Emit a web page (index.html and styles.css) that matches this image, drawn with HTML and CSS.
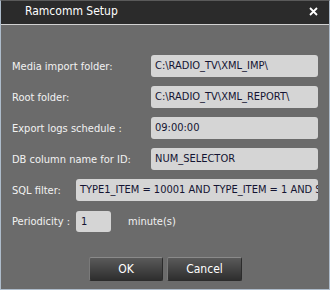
FILE: index.html
```html
<!DOCTYPE html>
<html>
<head>
<meta charset="utf-8">
<link rel="stylesheet" href="styles.css">
</head>
<body>
<div class="window">
  <div class="titlebar">
    <span class="title">Ramcomm Setup</span>
    <svg class="close" width="9" height="9" viewBox="0 0 9 9"><path d="M1 1L8 8M8 1L1 8" stroke="#ffffff" stroke-width="1.8"/></svg>
  </div>
  <div class="content">
    <div class="row"><span class="label wide">Media import folder:</span><div class="field long">C:\RADIO_TV\XML_IMP\</div></div>
    <div class="row"><span class="label wide">Root folder:</span><div class="field long">C:\RADIO_TV\XML_REPORT\</div></div>
    <div class="row"><span class="label wide">Export logs schedule :</span><div class="field long">09:00:00</div></div>
    <div class="row"><span class="label wide">DB column name for ID:</span><div class="field long">NUM_SELECTOR</div></div>
    <div class="row"><span class="label narrow">SQL filter:</span><div class="field sql">TYPE1_ITEM = 10001 AND TYPE_ITEM = 1 AND S</div></div>
    <div class="row"><span class="label narrow">Periodicity :</span><div class="field small">1</div><span class="unit">minute(s)</span></div>
    <div class="buttons">
      <button class="btn ok">OK</button>
      <button class="btn cancel">Cancel</button>
    </div>
  </div>
</div>
</body>
</html>
```
FILE: styles.css
```css
html, body {
  margin: 0;
  padding: 0;
  background: #6b6b6b;
}
.window {
  width: 330px;
  height: 290px;
  box-sizing: border-box;
  border: 1px solid #aebccb;
  border-top-color: #5a5a5a;
  background: linear-gradient(#767676 0, #6b6b6b 14px, #6b6b6b 100%);
  font-family: "DejaVu Sans Condensed", "DejaVu Sans", sans-serif;
  font-size: 11px;
  display: flex;
  flex-direction: column;
}
.titlebar {
  height: 23px;
  background: #2b2b2b;
  border-bottom: 1px solid #d2d2d2;
  display: flex;
  align-items: center;
  justify-content: space-between;
  padding: 0 11px 0 24px;
  color: #ffffff;
  flex: none;
}
.title {
  font-size: 12px;
  margin-top: -3px;
}
.close {
  margin-top: -2px;
}
.content {
  flex: 1;
  padding: 30px 11px 0 11px;
  display: flex;
  flex-direction: column;
  gap: 9px;
}
.row {
  display: flex;
  align-items: center;
  height: 22px;
}
.label {
  color: #f2f2f2;
}
.label.wide {
  width: 139px;
  flex: none;
}
.label.narrow {
  width: 64px;
  flex: none;
}
.field {
  height: 22px;
  box-sizing: border-box;
  background: #d5d5d5;
  border-radius: 3px;
  color: #141432;
  padding-left: 4px;
  line-height: 22px;
  white-space: nowrap;
  overflow: hidden;
}
.field.long {
  width: 167px;
}
.field.sql {
  width: 242px;
}
.field.small {
  width: 35px;
  height: 21px;
  line-height: 21px;
  padding-left: 5px;
}
.unit {
  color: #f2f2f2;
  margin-left: 17px;
}
.buttons {
  display: flex;
  justify-content: center;
  gap: 4px;
  margin-top: 16px;
  padding-left: 1px;
}
.btn {
  height: 24px;
  box-sizing: border-box;
  border: 1px solid #2c2c2c;
  border-top-color: #8a8a8a;
  border-left-color: #7a7a7a;
  border-radius: 2px;
  background: linear-gradient(#5a5a5a, #2e2e2e);
  color: #ffffff;
  font-family: "DejaVu Sans Condensed", "DejaVu Sans", sans-serif;
  font-size: 12px;
  padding: 0;
}
.btn.ok {
  width: 74px;
}
.btn.cancel {
  width: 75px;
}
```
